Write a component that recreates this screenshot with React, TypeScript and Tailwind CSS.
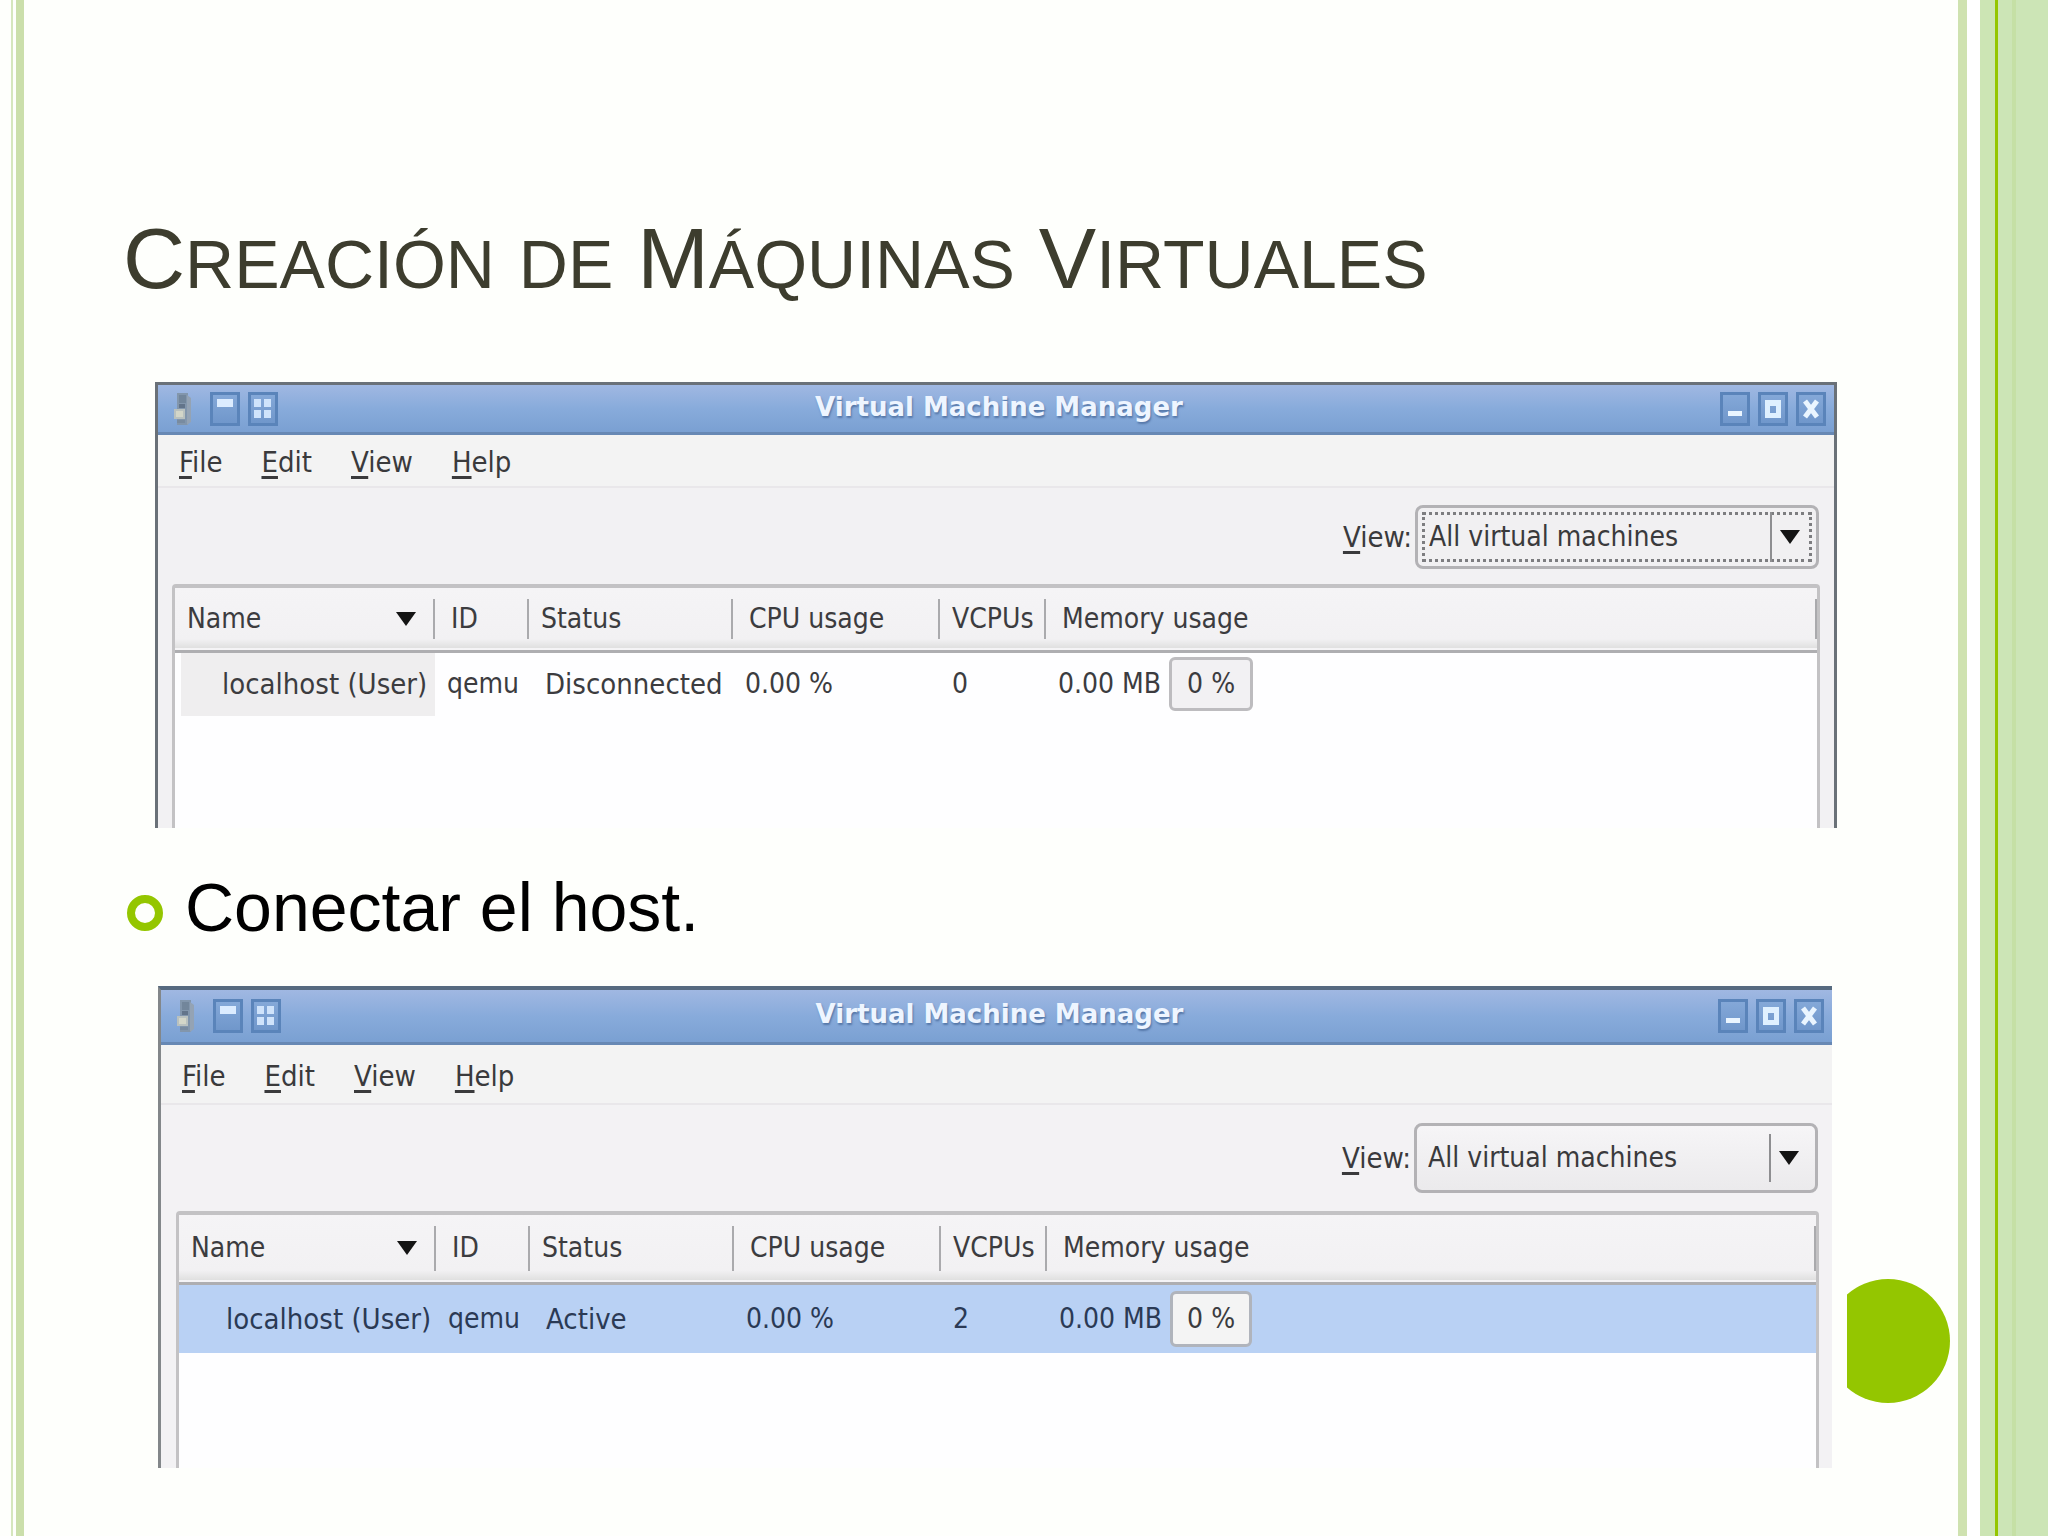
import React from "react";

type Variant = "focused" | "plain";

interface Machine {
  name: string;
  id: string;
  status: string;
  cpu: string;
  vcpus: string;
  memory: string;
  percent: string;
}

const TriangleDown = () => (
  <svg viewBox="0 0 20 14" className="h-[14px] w-5 shrink-0" aria-hidden="true">
    <path d="M0 0H20L10 14Z" fill="#141414" />
  </svg>
);

const ComputerIcon = () => (
  <svg viewBox="0 0 22 34" className="h-[34px] w-[22px]" aria-hidden="true">
    <path d="M5 1h11v32H5z" fill="#8296ac" />
    <path d="M7 3h7v8H7z" fill="#72869b" />
    <path d="M15 3l4 3v24l-4 3z" fill="#94a3b4" />
    <path d="M7 12h6v4H7z" fill="#62748a" />
    <path d="M2 17h11v10H2z" fill="#b9c1bf" />
    <path d="M4 19h7v6H4z" fill="#d3d6c8" />
    <path d="M5 28h8v3H5z" fill="#788ba0" />
  </svg>
);

const TitleButton = ({ label, children }: { label: string; children: React.ReactNode }) => (
  <button
    type="button"
    aria-label={label}
    className="h-[34px] w-[30px] border-3 border-[#5a84ba] bg-linear-to-b from-[#84a8d8] to-[#7097cb]"
  >
    <svg viewBox="1 1 24 28" className="h-7 w-6" aria-hidden="true">
      {children}
    </svg>
  </button>
);

const Mnemonic = ({ text }: { text: string }) => (
  <>
    <span className="underline decoration-3 underline-offset-4">{text[0]}</span>
    {text.slice(1)}
  </>
);

const columns = ["Name", "ID", "Status", "CPU usage", "VCPUs", "Memory usage"];

const headPad = ["pl-3", "pl-4", "pl-3", "pl-4", "pl-3", "pl-4"];

function ManagerWindow({ variant, machine }: { variant: Variant; machine: Machine }) {
  const focused = variant === "focused";
  return (
    <section
      aria-label="Virtual Machine Manager"
      className={
        focused
          ? "flex h-[446px] flex-col border-x-3 border-t-3 border-[#6a7178] bg-[#f2f1f3]"
          : "flex h-[482px] flex-col border-t-4 border-l-3 border-t-[#566a80] border-l-[#83878a] bg-[#f3f2f4]"
      }
    >
      <header
        className={
          (focused ? "h-[50px] " : "h-[55px] ") +
          "flex shrink-0 items-center justify-between border-b-3 border-[#6788b4] bg-linear-to-b from-[#a0b8e2] via-[#88abdb] to-[#7aa0d2] pr-2 pl-[14px]"
        }
      >
        <div className="flex items-center gap-2">
          <div className="mr-2">
            <ComputerIcon />
          </div>
          <TitleButton label="Window menu">
            <path d="M5 5h16v8H5z" fill="#dcecff" />
          </TitleButton>
          <TitleButton label="All workspaces">
            <path d="M4 5h7v8H4zM14 5h7v8h-7zM4 16h7v8H4zM14 16h7v8h-7z" fill="#cfe3fb" />
          </TitleButton>
        </div>
        <h2 className="pb-1 font-['DejaVu_Sans',sans-serif] text-[26px] font-bold text-[#eef5ff] [text-shadow:1px_2px_2px_#5577a8]">
          Virtual Machine Manager
        </h2>
        <div className="flex items-center gap-2">
          <TitleButton label="Minimize">
            <path d="M6 17h14v5H6z" fill="#eaf5ff" />
          </TitleButton>
          <TitleButton label="Maximize">
            <path d="M5 6h16v18H5zM10 12v7h6v-7z" fillRule="evenodd" fill="#dff0ff" />
          </TitleButton>
          <TitleButton label="Close">
            <path d="M7 7L19 23M19 7L7 23" stroke="#eaf5ff" strokeWidth="5" fill="none" />
          </TitleButton>
        </div>
      </header>

      <nav
        className={
          (focused ? "h-[53px] pt-[2px] " : "h-[60px] pt-1 ") +
          "flex shrink-0 items-center gap-[39px] border-b-2 border-[#e9e7ea] bg-[#f3f3f3] px-[21px] text-[29px] text-[#3a3a3c]"
        }
      >
        {["File", "Edit", "View", "Help"].map((item) => (
          <button type="button" key={item}>
            <Mnemonic text={item} />
          </button>
        ))}
      </nav>

      <div
        className={
          focused
            ? "flex h-24 shrink-0 items-center justify-end pt-[2px] pr-[15px] text-[#3a3a3c]"
            : "flex h-[106px] shrink-0 items-center justify-end pr-[14px] text-[#3a3a3c]"
        }
      >
        <label htmlFor={"view-" + variant} className="mr-[3px] text-[29px]">
          <Mnemonic text="View:" />
        </label>
        <div
          className={
            focused
              ? "relative h-16 w-[404px] rounded-lg border-3 border-[#b3b2b5] bg-[#f1f0f2] p-1"
              : "relative h-[70px] w-[404px] rounded-lg border-3 border-[#b3b2b5] bg-linear-to-b from-[#f6f5f7] to-[#ebeaec] p-1"
          }
        >
          <select
            id={"view-" + variant}
            className={
              focused
                ? "h-full w-full appearance-none border-3 border-dotted border-[#7d7d80] pl-1 outline-none"
                : "h-full w-full appearance-none pl-[7px] outline-none"
            }
          >
            <option>All virtual machines</option>
          </select>
          <div
            className={
              (focused ? "inset-y-1 " : "inset-y-2 ") +
              "pointer-events-none absolute right-4 flex items-center border-l-2 border-[#8e8e91] pl-2"
            }
          >
            <TriangleDown />
          </div>
        </div>
      </div>

      <div
        className={
          (focused ? "mx-[14px] " : "mr-[13px] ml-[15px] ") +
          "min-h-0 flex-1 rounded-t-sm border-x-3 border-t-4 border-[#c3c2c4] bg-[#fefeff]"
        }
      >
        <table className="w-full table-fixed border-collapse text-left text-[#3c3c3f]">
          <colgroup>
            <col className={focused ? "w-[260px]" : "w-[257px]"} />
            <col className="w-[94px]" />
            <col className="w-[204px]" />
            <col className="w-[207px]" />
            <col className="w-[106px]" />
            <col />
          </colgroup>
          <thead>
            <tr
              className={
                (focused ? "h-[63px] " : "h-[68px] ") +
                "border-b-3 border-[#aeaeb1] bg-linear-to-b from-[#f5f4f6] via-[#f2f1f3] via-85% to-[#e0e0e0]"
              }
            >
              {columns.map((column, i) => (
                <th key={column} scope="col" className="p-0 font-normal">
                  <div
                    className={
                      headPad[i] +
                      (focused ? " h-10" : " h-[45px]") +
                      " flex items-center justify-between border-r-2 border-[#aaaaad]"
                    }
                  >
                    <span className="whitespace-nowrap">{column}</span>
                    {i === 0 && (
                      <span className="mr-[17px]">
                        <TriangleDown />
                      </span>
                    )}
                  </div>
                </th>
              ))}
            </tr>
          </thead>
          <tbody>
            <tr
              className={
                focused ? "h-[63px] whitespace-nowrap" : "h-[68px] bg-[#b9d1f4] whitespace-nowrap text-[#2b3a55]"
              }
            >
              <td className="p-0 pl-[6px] text-[29px]">
                <div
                  className={
                    focused
                      ? "flex h-[63px] items-center bg-[#efeeef] pl-[41px]"
                      : "flex h-[68px] items-center pl-[41px]"
                  }
                >
                  {machine.name}
                </div>
              </td>
              <td className="p-0 pl-3">{machine.id}</td>
              <td className="p-0 pl-4 text-[29px]">{machine.status}</td>
              <td className="p-0 pl-3">{machine.cpu}</td>
              <td className="p-0 pl-3">{machine.vcpus}</td>
              <td className="p-0 pl-3">
                <div className="flex items-center gap-2">
                  <span>{machine.memory}</span>
                  <span
                    className={
                      focused
                        ? "flex h-[54px] w-[84px] items-center justify-center rounded-md border-3 border-[#bdbcbf] bg-[#f2f1f3]"
                        : "flex h-14 w-[82px] items-center justify-center rounded-md border-3 border-[#b0b4bc] bg-[#f4f4f4] text-[#3c3c3f]"
                    }
                  >
                    {machine.percent}
                  </span>
                </div>
              </td>
            </tr>
          </tbody>
        </table>
      </div>
    </section>
  );
}

const titleWords = ["Creación", "de", "Máquinas", "Virtuales"];

export default function App() {
  return (
    <div className="flex min-h-screen bg-[#fefffc] font-['DejaVu_Sans_Condensed','DejaVu_Sans',sans-serif] text-[28px] leading-8">
      <div className="ml-[11px] w-[2px] shrink-0 bg-[#d5e6bd]" />
      <div className="ml-[3px] w-2 shrink-0 bg-[#cbdfab]" />

      <main className="min-w-0 flex-1 pt-[210px] pr-[121px] pl-[131px]">
        <h1 className="-ml-8 h-[172px] font-['Liberation_Sans',Arial,sans-serif] text-[68px] leading-[96px] whitespace-nowrap text-[#3d3d2e] uppercase">
          {titleWords.map((word, i) => (
            <React.Fragment key={word}>
              {i > 0 && <span className="text-[86px]"> </span>}
              {word === "de" ? (
                word
              ) : (
                <>
                  <span className="text-[86px]">{word[0]}</span>
                  {word.slice(1)}
                </>
              )}
            </React.Fragment>
          ))}
        </h1>

        <ManagerWindow
          variant="focused"
          machine={{
            name: "localhost (User)",
            id: "qemu",
            status: "Disconnected",
            cpu: "0.00 %",
            vcpus: "0",
            memory: "0.00 MB",
            percent: "0 %",
          }}
        />

        <ul className="-ml-7 flex h-[158px] items-center font-['Liberation_Sans',Arial,sans-serif] text-[68px] text-black">
          <li className="flex items-center gap-[22px]">
            <span className="mt-3 size-9 rounded-full border-8 border-[#94c600]" />
            Conectar el host.
          </li>
        </ul>

        <div className="relative mr-[5px] ml-[3px]">
          <ManagerWindow
            variant="plain"
            machine={{
              name: "localhost (User)",
              id: "qemu",
              status: "Active",
              cpu: "0.00 %",
              vcpus: "2",
              memory: "0.00 MB",
              percent: "0 %",
            }}
          />
          <svg
            viewBox="0 0 103 124"
            className="absolute top-[293px] left-full ml-[15px] h-[124px] w-[103px]"
            aria-hidden="true"
          >
            <circle cx="41" cy="62" r="62" fill="#94c600" />
          </svg>
        </div>
      </main>

      <div className="w-[9px] shrink-0 bg-[#cfe2b0]" />
      <div className="w-[13px] shrink-0 bg-white" />
      <div className="w-[15px] shrink-0 bg-[#cce5b4]" />
      <div className="w-[3px] shrink-0 bg-[#94c600]" />
      <div className="w-[14px] shrink-0 bg-[#cce5b6]" />
      <div className="w-1 shrink-0 bg-[#c5e0a5]" />
      <div className="w-8 shrink-0 bg-[#cce5b6]" />
    </div>
  );
}
